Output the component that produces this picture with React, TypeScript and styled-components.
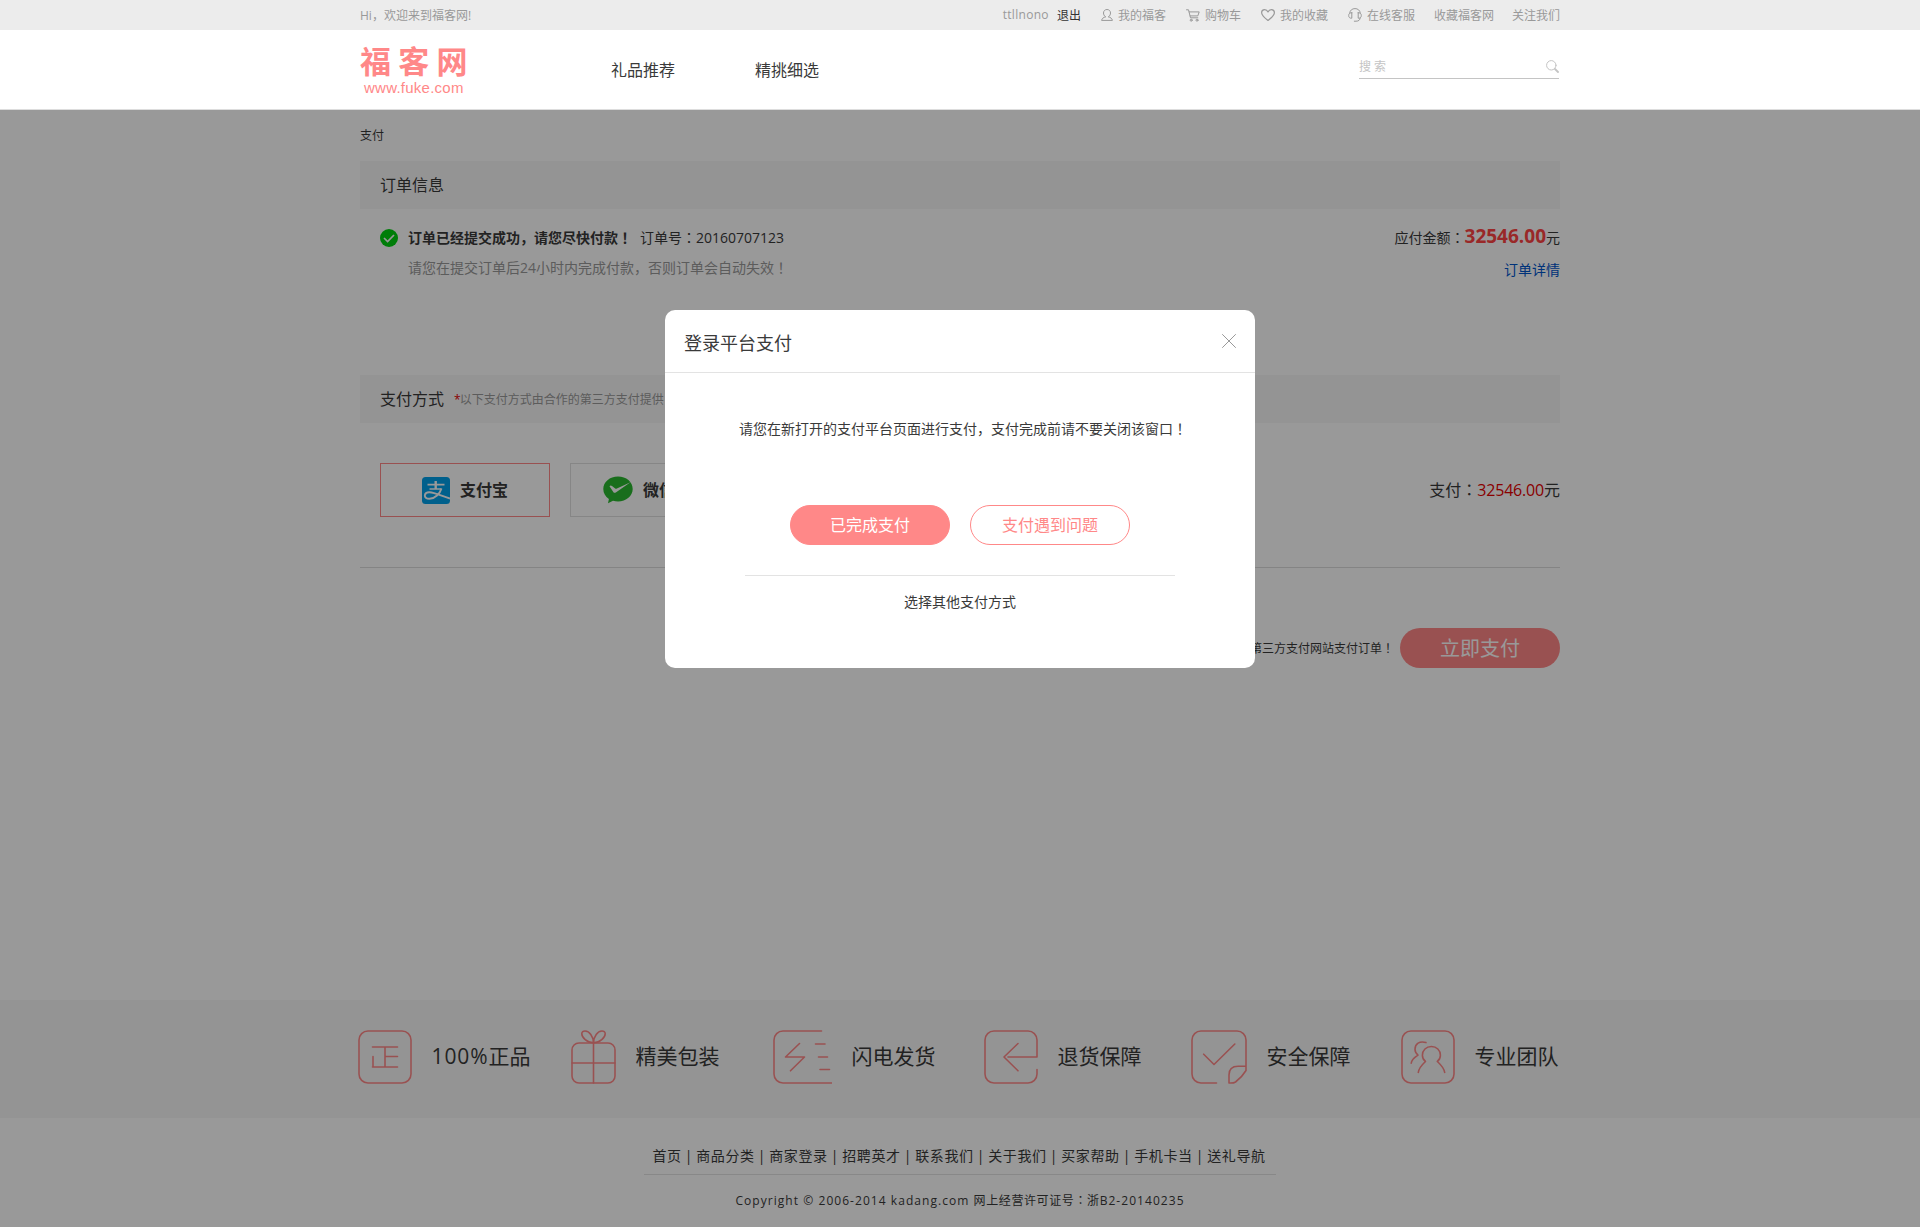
import React from "react";
import styled, { createGlobalStyle } from "styled-components";

const PINK = "#ff8888";

const GlobalStyle = createGlobalStyle`
  * { box-sizing: border-box; }
  body {
    margin: 0;
    background: #fff;
    color: #3a3a3a;
    font-family: "Open Sans", "Noto Sans CJK SC", sans-serif;
    font-size: 12px;
  }
`;

const Page = styled.div`
  position: relative;
  width: 1920px;
  height: 1227px;
  overflow: hidden;
`;

const Container = styled.div`
  width: 1200px;
  margin: 0 auto;
`;

/* Full-width colon and exclamation mark sit in the middle of their cell */
const CenteredMark = styled.span`
  font-family: "Noto Sans CJK JP", sans-serif;
  line-height: 0;
`;

const FULL_WIDTH: Record<string, string> = { ":": "\uff1a", "!": "\uff01", ",": "\uff0c" };

/* Sets Chinese text with full-width punctuation */
const Zh = ({ text }: { text: string }) => (
  <>
    {text.split(/([:!,])/).map((part, i) =>
      FULL_WIDTH[part] ? <CenteredMark key={i}>{FULL_WIDTH[part]}</CenteredMark> : part
    )}
  </>
);

/* ---------- top bar ---------- */

const TopBar = styled.div`
  height: 30px;
  background: #ececec;
  color: #999;
`;

const TopInner = styled(Container)`
  display: flex;
  justify-content: space-between;
  height: 30px;
  line-height: 31px;
`;

const TopLinks = styled.div`
  display: flex;
  align-items: center;
`;

const TopLink = styled.a<{ $gap?: number; $dark?: boolean }>`
  display: flex;
  align-items: center;
  gap: 5px;
  height: 30px;
  margin-left: ${(p) => p.$gap ?? 20}px;
  color: ${(p) => (p.$dark ? "#333" : "#999")};
  line-height: ${(p) => (p.$dark ? 29 : 31)}px;
  white-space: nowrap;
`;

const UserName = styled.span`
  font-size: 12px;
  letter-spacing: 0.3px;
  line-height: 29px;
  height: 30px;
`;

const Stroke = styled.svg<{ $w?: number }>`
  display: block;
  flex: none;
  fill: none;
  stroke: currentColor;
  stroke-width: ${(p) => p.$w ?? 1};
  stroke-linecap: round;
  stroke-linejoin: round;
`;

const UserIcon = () => (
  <Stroke width="12" height="12" viewBox="0 0 12 12">
    <path d="M4.400 7.800C3.200 6.900 2.500 5.500 2.500 4 2.500 1.900 4 .5 6 .5s3.500 1.400 3.500 3.500c0 1.500-.7 2.900-1.900 3.800M4.400 7.800C2.200 8.500.9 9.600.6 11.400h10.800c-.3-1.800-1.600-2.900-3.800-3.600" />
  </Stroke>
);

const CartIcon = () => (
  <Stroke width="14" height="13" viewBox="0 0 14 13">
    <path d="M.5.8h2l2 8h7.300M3.200 2.900h10l-1.400 4H4.200" />
    <circle cx="5.200" cy="11.200" r="1" />
    <circle cx="11" cy="11.200" r="1" />
  </Stroke>
);

const HeartIcon = () => (
  <Stroke $w={1.2} width="14" height="12" viewBox="0 0 14 12">
    <path d="M7 11.500C4.500 9.500.6 6.500.6 3.700.6 1.800 2 .6 3.600.6 5 .6 6.300 1.400 7 2.900 7.700 1.400 9 .6 10.400.6c1.600 0 3 1.200 3 3.100 0 2.800-3.900 5.800-6.400 7.800z" />
  </Stroke>
);

const HeadsetIcon = () => (
  <Stroke width="14" height="14" viewBox="0 0 14 14">
    <path d="M1.700 5C2 2.200 4.200.6 7 .6S12 2.200 12.300 5M3.800 4.800v5.400C1.800 10.400.7 9.400.7 7.500S1.800 4.600 3.800 4.800zM10.200 4.800v5.400c2 .2 3.100-.8 3.100-2.700S12.200 4.600 10.200 4.800zM12.200 10c-.2 2-1.500 3.200-4.200 3.200H6.300" />
  </Stroke>
);

/* ---------- header ---------- */

const Header = styled.header`
  height: 80px;
  border-bottom: 1px solid #ddd;
  background: #fff;
`;

const HeaderInner = styled(Container)`
  display: flex;
  align-items: flex-start;
`;

const Logo = styled.div`
  width: 251px;
  padding-top: 16px;
  color: ${PINK};
`;

const LogoName = styled.div`
  font-size: 31px;
  font-weight: 700;
  letter-spacing: 7.3px;
  line-height: 30px;
`;

const LogoUrl = styled.div`
  margin-top: 3px;
  padding-left: 4px;
  font-family: "Liberation Sans", Arial, sans-serif;
  font-size: 15px;
  letter-spacing: 0.25px;
  line-height: 17px;
`;

const Nav = styled.nav`
  display: flex;
  gap: 80px;
  flex: 1;
  font-size: 16px;
  line-height: 81px;
`;

const Search = styled.div`
  display: flex;
  align-items: center;
  justify-content: space-between;
  width: 200px;
  height: 25px;
  margin: 24px 1px 0 0;
  border-bottom: 1px solid #c4c4c4;
  color: #c4c4c4;
  letter-spacing: 3px;
`;

/* ---------- order ---------- */

const Crumb = styled.div`
  height: 51px;
  line-height: 52px;
`;

const SectionBar = styled.div`
  display: flex;
  align-items: center;
  height: 48px;
  padding-left: 20px;
  background: #f7f7f7;
`;

const SectionTitle = styled.h2`
  margin: 0;
  font-size: 16px;
  font-weight: 400;
  line-height: 48px;
`;

const SectionNote = styled.span`
  margin-left: 10px;
  color: #999;
  line-height: 49px;
`;

const Asterisk = styled.span`
  color: #e60000;
  letter-spacing: -1px;
`;

const OrderRow = styled.div`
  display: flex;
  justify-content: space-between;
  height: 166px;
  padding: 14px 0 0 20px;
  font-size: 14px;
`;

const OrderStatus = styled.div`
  display: grid;
  grid-template-columns: 18px auto;
  column-gap: 10px;
  align-content: start;
  align-items: center;
  grid-auto-rows: 30px;
  line-height: 30px;
`;

const OrderHead = styled.div`
  display: flex;
  gap: 8px;
`;

const Muted = styled.div`
  grid-column: 2;
  color: #999;
`;

const OrderAmount = styled.div`
  text-align: right;
  line-height: 30px;
`;

const DetailLink = styled.a`
  display: block;
  padding-top: 2px;
  color: #0055cc;
`;

const Price = styled.strong`
  color: #ff4444;
  font-size: 19px;
  line-height: 0;
`;

/* ---------- payment ---------- */

const PayRow = styled.div`
  display: flex;
  align-items: center;
  height: 145px;
  padding: 0 0 11px 20px;
  border-bottom: 1px solid #ddd;
`;

const PayOption = styled.div<{ $active?: boolean }>`
  display: flex;
  align-items: center;
  justify-content: center;
  gap: 10px;
  width: 170px;
  height: 54px;
  margin-right: 20px;
  padding-top: 1px;
  border: 1px solid ${(p) => (p.$active ? PINK : "#e0e0e0")};
  font-size: 16px;
  font-weight: 700;
  line-height: 52px;
`;

const PayTotal = styled.div`
  margin-left: auto;
  font-size: 16px;
  line-height: 54px;
`;

const Red = styled.span`
  color: #e60000;
  letter-spacing: -0.2px;
`;

const SubmitRow = styled.div`
  display: flex;
  align-items: center;
  justify-content: flex-end;
  gap: 6px;
  height: 40px;
  margin-top: 60px;
  line-height: 40px;
`;

const SubmitNote = styled.span`
  padding-top: 1px;
`;

const SubmitButton = styled.button`
  width: 160px;
  height: 40px;
  padding: 0;
  border: 0;
  border-radius: 20px;
  background: ${PINK};
  color: #fff;
  font: inherit;
  font-size: 20px;
  line-height: 42px;
`;

const AlipayIcon = () => (
  <svg width="28" height="27" viewBox="0 0 28 27">
    <rect width="28" height="27" rx="3.500" fill="#00a0e9" />
    <g fill="none" stroke="#fff" strokeLinecap="butt">
      <path d="M5.500 7.600h17M7.500 12h12" strokeWidth="1.700" />
      <path d="M13.700 4v8" strokeWidth="2.400" />
      <path d="M19.500 11.500C18 16.500 13 21.800 7.500 21.800c-3.400 0-4.900-1.700-4.600-3.700.3-2 2.200-3 4.600-2.900 5.500.3 11.500 3.600 20.500 6.300" strokeWidth="1.900" />
    </g>
  </svg>
);

const WechatPayIcon = () => (
  <svg width="30" height="28" viewBox="0 0 30 28">
    <path d="M15 .5C6.700.5.3 6 .3 13c0 4 2 7.500 5.600 9.900L5 27.300l5-2.600c1.600.5 3.200.7 5 .7 8.300 0 14.700-5.600 14.700-12.500S23.300.5 15 .5z" fill="#2ab830" />
    <path d="M6.500 10.300c.8-1 1.700-.8 2.500-.2l3.200 2.300c.6.4 1 .4 1.700.1L27.500 6.200 12.800 16.400c-1 .7-1.900.6-2.500-.5z" fill="#fff" />
  </svg>
);

/* ---------- promises ---------- */

const Promises = styled.section`
  height: 118px;
  margin-top: 332px;
  background: #f7f7f7;
`;

const PromiseGrid = styled.div`
  display: grid;
  grid-template-columns: 213px 202px 211px 207px 210px auto;
  width: 1204px;
  margin: 0 auto;
  padding-top: 30px;
`;

const PromiseItem = styled.div`
  display: flex;
  align-items: center;
  gap: 19.500px;
  height: 54px;
  font-size: 21px;
  line-height: 52px;
  white-space: nowrap;

  svg { color: ${PINK}; }
`;

const PromiseLabel = styled.span`
  height: 54px;
`;

const Percent = styled.span`
  letter-spacing: 0.9px;
`;

const Frame = () => <rect x="1" y="1" width="52" height="52" rx="9" />;

const GenuineIcon = () => (
  <Stroke $w={1.6} width="54" height="54" viewBox="0 0 54 54">
    <Frame />
    <path d="M14.500 17h25M27 17v20M27 26.500h12.500M15 26.500V37M14.500 37h25" />
  </Stroke>
);

const GiftIcon = () => (
  <Stroke $w={1.6} width="45" height="54" viewBox="0 0 45 54">
    <rect x="1" y="13" width="43" height="40" rx="7" />
    <path d="M22.500 13v40M1 33h43M22.500 12.700C16 12.700 10.800 7.500 10.800 3.800 10.800.2 16.500-.2 19.800 4.500c1.900 2.700 2.700 5.400 2.700 8.200zM22.500 12.700c6.500 0 11.700-5.200 11.700-8.900 0-3.600-5.700-4-9 .7-1.900 2.700-2.700 5.400-2.700 8.200z" />
  </Stroke>
);

const FlashIcon = () => (
  <Stroke $w={1.6} width="59" height="54" viewBox="0 0 59 54">
    <path d="M48.500 1H10a9 9 0 0 0-9 9v34a9 9 0 0 0 9 9h48.500M26.500 13.500L12.500 27h19l-14 13.800M42.500 14h9.500M45.500 27h9M47 39.500h9.500" />
  </Stroke>
);

const ReturnIcon = () => (
  <Stroke $w={1.6} width="54" height="54" viewBox="0 0 54 54">
    <path d="M24 27h29V10a9 9 0 0 0-9-9H10a9 9 0 0 0-9 9v34a9 9 0 0 0 9 9h34a9 9 0 0 0 9-9v-4.500M34 13.500L20 27l14 13.800" />
  </Stroke>
);

const SafeIcon = () => (
  <Stroke $w={1.6} width="56" height="54" viewBox="0 0 56 54">
    <path d="M25.500 53H10a9 9 0 0 1-9-9V10a9 9 0 0 1 9-9h36a9 9 0 0 1 9 9v30.500c-3 5-6.500 8.500-10.500 11.500-1.500 1-3.500 1.200-6.500 1V45c0-6 3-8.700 9-8.700h8M12.700 24.200L23 34.500 43.800 14" />
  </Stroke>
);

const TeamIcon = () => (
  <Stroke $w={1.6} width="54" height="54" viewBox="0 0 54 54">
    <Frame />
    <path d="M17.300 42.500c.5-5 4-8 7.200-11C22.500 30 21.400 27.800 21.400 25.200c0-5 3.800-8.700 9-8.700s9 3.700 9 8.700c0 2.600-1.100 4.800-3.100 6.300 3.200 3 6.700 6 7.400 11M25 12.600C18.500 10.500 14 14 14 19.300c0 2.500 1 4.300 3 5.800-4 2.500-6.500 5-6.800 8.200" />
  </Stroke>
);

const promises = [
  { Icon: GenuineIcon, percent: "100%", label: "正品" },
  { Icon: GiftIcon, label: "精美包装" },
  { Icon: FlashIcon, label: "闪电发货" },
  { Icon: ReturnIcon, label: "退货保障" },
  { Icon: SafeIcon, label: "安全保障" },
  { Icon: TeamIcon, label: "专业团队" },
];

/* ---------- footer ---------- */

const Footer = styled.footer`
  display: flex;
  flex-direction: column;
  align-items: center;
`;

const FooterLinks = styled.div`
  display: flex;
  justify-content: center;
  width: 632px;
  height: 57px;
  padding: 22px 2px 0 0;
  border-bottom: 1px solid #e3e3e3;
  font-size: 14px;
  letter-spacing: 0.6px;
  line-height: 32px;
  white-space: nowrap;
`;

const Bar = styled.span`
  width: 14.6px;
  text-align: center;
`;

const Copyright = styled.div`
  height: 52px;
  font-size: 12px;
  letter-spacing: 1.05px;
  line-height: 51px;
  white-space: nowrap;
`;

const License = styled.span`
  letter-spacing: 0.6px;
`;

const footerLinks = ["首页", "商品分类", "商家登录", "招聘英才", "联系我们", "关于我们", "买家帮助", "手机卡当", "送礼导航"];

/* ---------- dialog ---------- */

const Overlay = styled.div`
  position: absolute;
  inset: 110px 0 0 0;
  display: flex;
  justify-content: center;
  align-items: flex-start;
  padding-top: 200px;
  background: rgba(0, 0, 0, 0.4);
`;

const Dialog = styled.div`
  width: 590px;
  height: 358px;
  border-radius: 10px;
  background: #fff;
`;

const DialogHead = styled.div`
  display: flex;
  justify-content: space-between;
  height: 63px;
  padding: 0 19px;
  border-bottom: 1px solid #e3e3e3;
  font-size: 18px;
  line-height: 66px;
`;

const CloseIcon = styled(Stroke)`
  margin-top: 24px;
  color: #999;
`;

const DialogBody = styled.div`
  display: flex;
  flex-direction: column;
  align-items: center;
  font-size: 14px;
`;

const Message = styled.p`
  height: 22px;
  margin: 45px 0 0 6px;
  line-height: 22px;
  white-space: nowrap;
`;

const Actions = styled.div`
  display: flex;
  gap: 20px;
  margin-top: 65px;
`;

const PillButton = styled.button<{ $solid?: boolean }>`
  width: 160px;
  height: 40px;
  padding: 0;
  border: 1px solid ${PINK};
  border-radius: 20px;
  background: ${(p) => (p.$solid ? PINK : "#fff")};
  color: ${(p) => (p.$solid ? "#fff" : PINK)};
  font: inherit;
  font-size: 16px;
  line-height: 38px;
`;

const OtherWay = styled.a`
  width: 430px;
  margin-top: 30px;
  border-top: 1px solid #e3e3e3;
  line-height: 51px;
  text-align: center;
`;

export default function App() {
  return (
    <Page>
      <GlobalStyle />
      <TopBar>
        <TopInner>
          <span>Hi<Zh text="," />欢迎来到福客网!</span>
          <TopLinks>
            <UserName>ttllnono</UserName>
            <TopLink $gap={8} $dark>退出</TopLink>
            <TopLink><UserIcon />我的福客</TopLink>
            <TopLink><CartIcon />购物车</TopLink>
            <TopLink><HeartIcon />我的收藏</TopLink>
            <TopLink><HeadsetIcon />在线客服</TopLink>
            <TopLink $gap={19}>收藏福客网</TopLink>
            <TopLink $gap={18}>关注我们</TopLink>
          </TopLinks>
        </TopInner>
      </TopBar>

      <Header>
        <HeaderInner>
          <Logo>
            <LogoName>福客网</LogoName>
            <LogoUrl>www.fuke.com</LogoUrl>
          </Logo>
          <Nav>
            <span>礼品推荐</span>
            <span>精挑细选</span>
          </Nav>
          <Search>
            <span>搜索</span>
            <Stroke width="13" height="13" viewBox="0 0 13 13">
              <circle cx="5.300" cy="5.300" r="4.700" />
              <path d="M9 9l3 3" strokeWidth="1.800" />
            </Stroke>
          </Search>
        </HeaderInner>
      </Header>

      <Container>
        <Crumb>支付</Crumb>
        <SectionBar>
          <SectionTitle>订单信息</SectionTitle>
        </SectionBar>
        <OrderRow>
          <OrderStatus>
            <svg width="18" height="18" viewBox="0 0 18 18">
              <circle cx="9" cy="9" r="9" fill="#00d010" />
              <path d="M4 9l3.600 3.500L14 6" fill="none" stroke="#fff" strokeWidth="1.700" />
            </svg>
            <OrderHead>
              <strong><Zh text="订单已经提交成功,请您尽快付款!" /></strong>
              <span><Zh text="订单号:20160707123" /></span>
            </OrderHead>
            <Muted><Zh text="请您在提交订单后24小时内完成付款,否则订单会自动失效!" /></Muted>
          </OrderStatus>
          <OrderAmount>
            <div><Zh text="应付金额:" /><Price>32546.00</Price>元</div>
            <DetailLink>订单详情</DetailLink>
          </OrderAmount>
        </OrderRow>

        <SectionBar>
          <SectionTitle>支付方式</SectionTitle>
          <SectionNote><Asterisk>*</Asterisk>以下支付方式由合作的第三方支付提供</SectionNote>
        </SectionBar>
        <PayRow>
          <PayOption $active><AlipayIcon />支付宝</PayOption>
          <PayOption><WechatPayIcon />微信支付</PayOption>
          <PayTotal><Zh text="支付:" /><Red>32546.00</Red>元</PayTotal>
        </PayRow>
        <SubmitRow>
          <SubmitNote><Zh text="请您到第三方支付网站支付订单!" /></SubmitNote>
          <SubmitButton>立即支付</SubmitButton>
        </SubmitRow>
      </Container>

      <Promises>
        <PromiseGrid>
          {promises.map(({ Icon, percent, label }) => (
            <PromiseItem key={label}>
              <Icon />
              <PromiseLabel>{percent && <Percent>{percent}</Percent>}{label}</PromiseLabel>
            </PromiseItem>
          ))}
        </PromiseGrid>
      </Promises>

      <Footer>
        <FooterLinks>
          {footerLinks.map((label, i) => (
            <React.Fragment key={label}>
              {i > 0 && <Bar>|</Bar>}
              <span>{label}</span>
            </React.Fragment>
          ))}
        </FooterLinks>
        <Copyright>
          Copyright © 2006-2014 kadang.com <License><Zh text="网上经营许可证号:浙" /></License>B2-20140235
        </Copyright>
      </Footer>

      <Overlay>
        <Dialog>
          <DialogHead>
            <span>登录平台支付</span>
            <CloseIcon width="14" height="14" viewBox="0 0 14 14">
              <path d="M.5.5l13 13M13.500.5l-13 13" />
            </CloseIcon>
          </DialogHead>
          <DialogBody>
            <Message><Zh text="请您在新打开的支付平台页面进行支付,支付完成前请不要关闭该窗口!" /></Message>
            <Actions>
              <PillButton $solid>已完成支付</PillButton>
              <PillButton>支付遇到问题</PillButton>
            </Actions>
            <OtherWay>选择其他支付方式</OtherWay>
          </DialogBody>
        </Dialog>
      </Overlay>
    </Page>
  );
}
